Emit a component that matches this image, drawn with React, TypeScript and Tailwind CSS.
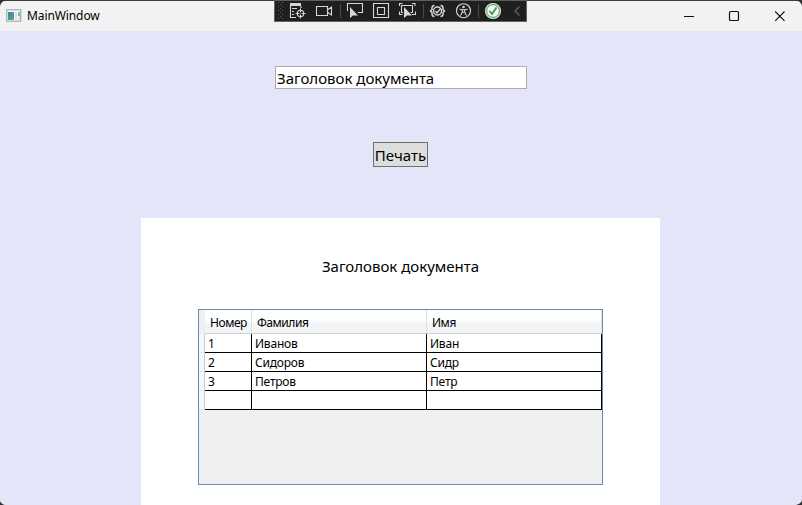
import type { ReactNode } from "react";

const people = [
  ["1", "Иванов", "Иван"],
  ["2", "Сидоров", "Сидр"],
  ["3", "Петров", "Петр"],
  ["", "", ""],
];

function AppIcon() {
  return (
    <svg width="16" height="13" viewBox="0 0 16 13" className="mb-[2px] shrink-0">
      <defs>
        <linearGradient id="pane" x1="0" y1="0" x2="1" y2="1">
          <stop offset="0" stopColor="#3f7fae" />
          <stop offset="1" stopColor="#4fae84" />
        </linearGradient>
      </defs>
      <rect x="0.75" y="0.75" width="14" height="11.5" fill="#fafafa" stroke="#a9b0b7" strokeWidth="1.3" />
      <rect x="2" y="3" width="6" height="8" fill="url(#pane)" />
      <rect x="9" y="3" width="2" height="8" fill="#dfe2e5" />
      <rect x="12" y="3" width="2" height="4" fill="#80b8b5" />
      <rect x="12" y="7" width="2" height="4" fill="#dfe2e5" />
    </svg>
  );
}

function DebugToolbar() {
  return (
    <div className="absolute left-[274px] top-0 h-[22px] w-[253px] border border-t-[#5d5d5d] border-[#626262] bg-[#1f1f1f]">
      <svg width="251" height="20" viewBox="275 1 251 20" fill="none" stroke="#d6d6d6" strokeWidth="1.1">
        <g fill="#5b5b5b" stroke="none">
          {[3, 7, 11, 15, 19].map((y) => (
            <g key={y}>
              <rect x="278" y={y - 1} width="1" height="1" />
              <rect x="282" y={y - 1} width="1" height="1" />
              {y < 19 && <rect x="280" y={y + 1} width="1" height="1" />}
            </g>
          ))}
        </g>
        <rect x="290" y="3" width="11" height="3" fill="#d6d6d6" stroke="none" />
        <path d="M290.5 5v12.5H296M301 6v2M292 8.5h5M292 11.5h2M292 14.5h2" />
        <circle cx="300.5" cy="13.5" r="3.2" />
        <path d="M300.500 8.500v4M300.500 14.500v4M295.500 13.500h4M301.500 13.500h4" />
        <path d="M316.500 6.500h11v9h-11zM328 9.500l3.500-2.500v8l-3.500-2.500" />
        <path d="M340.500 4v14M423.500 4v14M478.500 4v14" stroke="#484848" />
        <path d="M347.500 11V3.500h15v9H358" />
        <path d="M350 7v11l3-2.500h5z" fill="#d6d6d6" stroke="none" />
        <path d="M373.500 3.500h15v14h-15zM377.500 7.500h7v7h-7z" />
        <path d="M399.500 6V3.500h3M412 3.500h3V6M399.500 11.500v3h3M415.500 11.500v3H412M403 12.500h-1.500v-7h11v7h-2" />
        <path d="M404 7v11l3-2.500h5z" fill="#d6d6d6" stroke="none" />
        <path d="M434.500 5.500q-2.500 0-2.500 2.500v1.500l-1.500 1.500 1.500 1.500V14q0 2.500 2.500 2.500M440.500 5.500q2.500 0 2.500 2.500v1.500l1.500 1.500-1.500 1.500V14q0 2.500-2.500 2.500" strokeWidth="1.500" />
        <circle cx="437.500" cy="11" r="4" strokeWidth="1.400" />
        <path d="M435.500 11l1.500 2 3.500-4.500" strokeWidth="1.300" />
        <circle cx="463.500" cy="10.700" r="7" />
        <circle cx="463.500" cy="7" r="1.300" fill="#d6d6d6" stroke="none" />
        <path d="M459.500 9.200l2.800.6v2.500l-1.800 3.200M467.500 9.200l-2.800.6v2.500l1.800 3.200M462.500 12.200h2M462.300 9.800h2.400" />
        <circle cx="493" cy="11" r="7.500" fill="#e6eee5" stroke="#d8dfd7" strokeWidth="1.200" />
        <circle cx="493" cy="11" r="6.400" fill="#f4f6f3" stroke="#3e9e45" strokeWidth="1" />
        <path d="M489.500 11l2.500 3 4.500-6.500" stroke="#339b3a" strokeWidth="1.700" />
        <path d="M519.500 6.500L515 11l4.500 4.500" stroke="#686868" />
      </svg>
    </div>
  );
}

function TitleBar() {
  return (
    <header className="flex h-[31px] shrink-0 items-center justify-between border-t border-[#3c3a3c] bg-[#f2f2f2]">
      <div className="flex items-center gap-[5px] pl-[6px]">
        <AppIcon />
        <span className="text-[12px] leading-4 tracking-[-0.1px] text-black">MainWindow</span>
      </div>
      <svg width="118" height="15" viewBox="684 8 118 15" fill="none" stroke="#111">
        <path d="M684 15.500h10" />
        <rect x="729.500" y="10.500" width="9" height="9" rx="1" strokeWidth="1.200" />
        <path d="M775.200 10.500l9.300 9.300M784.500 10.500l-9.300 9.300" strokeWidth="1.100" />
      </svg>
    </header>
  );
}

function Heading({ children }: { children: ReactNode }) {
  return <span className="whitespace-nowrap text-[15px] leading-5">{children}</span>;
}

function PeopleTable() {
  return (
    <div className="h-[176px] w-[405px] border border-[#688caf] bg-[#f0f0f0] text-[12px] leading-4">
      <div className="grid h-6 grid-cols-[6px_47px_175px_175px] bg-linear-to-b from-white from-40% to-[#f3f4f6] to-60%">
        <div className="bg-[#f0f0f0]" />
        {["Номер", "Фамилия", "Имя"].map((name) => (
          <div key={name} className="flex items-center overflow-hidden whitespace-nowrap border-b border-r border-b-[#d0d0d0] border-r-[#dedfe1] pl-[5px] pt-[3px] tracking-[-0.45px]">
            {name}
          </div>
        ))}
      </div>
      {people.map((row, index) => (
        <div key={index} className="grid h-[19px] grid-cols-[6px_47px_175px_175px]">
          <div className="border-b border-r border-b-[#e0e0e0] border-r-[#c9c9c9] bg-[#f8f8f8]" />
          {row.map((value, column) => (
            <div key={column} className="flex items-center border-b border-r border-black bg-white pl-[3px] pt-[2px] tracking-[-0.2px]">
              {value}
            </div>
          ))}
        </div>
      ))}
    </div>
  );
}

export default function App() {
  return (
    <div className="relative flex h-[505px] w-[802px] flex-col overflow-hidden bg-[#e5e5f9] font-['Noto_Sans','Open_Sans',sans-serif] text-black">
      <TitleBar />
      <DebugToolbar />
      <main className="flex flex-1 flex-col items-center">
        <div className="mt-[35px] flex h-[23px] w-[252px] items-center border border-[#abadb3] bg-white pl-[1px]">
          <Heading>Заголовок документа</Heading>
        </div>
        <button className="mr-[1px] mt-[53px] flex h-[25px] w-[55px] items-center justify-center border border-[#707070] bg-[#dddddd]">
          <Heading>Печать</Heading>
        </button>
        <section className="mr-[1px] mt-[51px] flex h-[287px] w-[519px] flex-col items-center bg-white">
          <h1 className="mt-[38px] flex h-5 items-center">
            <Heading>Заголовок документа</Heading>
          </h1>
          <div className="mt-[33px]">
            <PeopleTable />
          </div>
        </section>
      </main>
      <svg className="pointer-events-none absolute inset-0" width="802" height="505" fill="#303030">
        <path d="M0 0h7Q1 1 0 6zM802 0h-7q6 1 7 6zM0 505v-4q1 3 5 4zM802 505v-5q-1 4-6 5z" />
      </svg>
    </div>
  );
}
